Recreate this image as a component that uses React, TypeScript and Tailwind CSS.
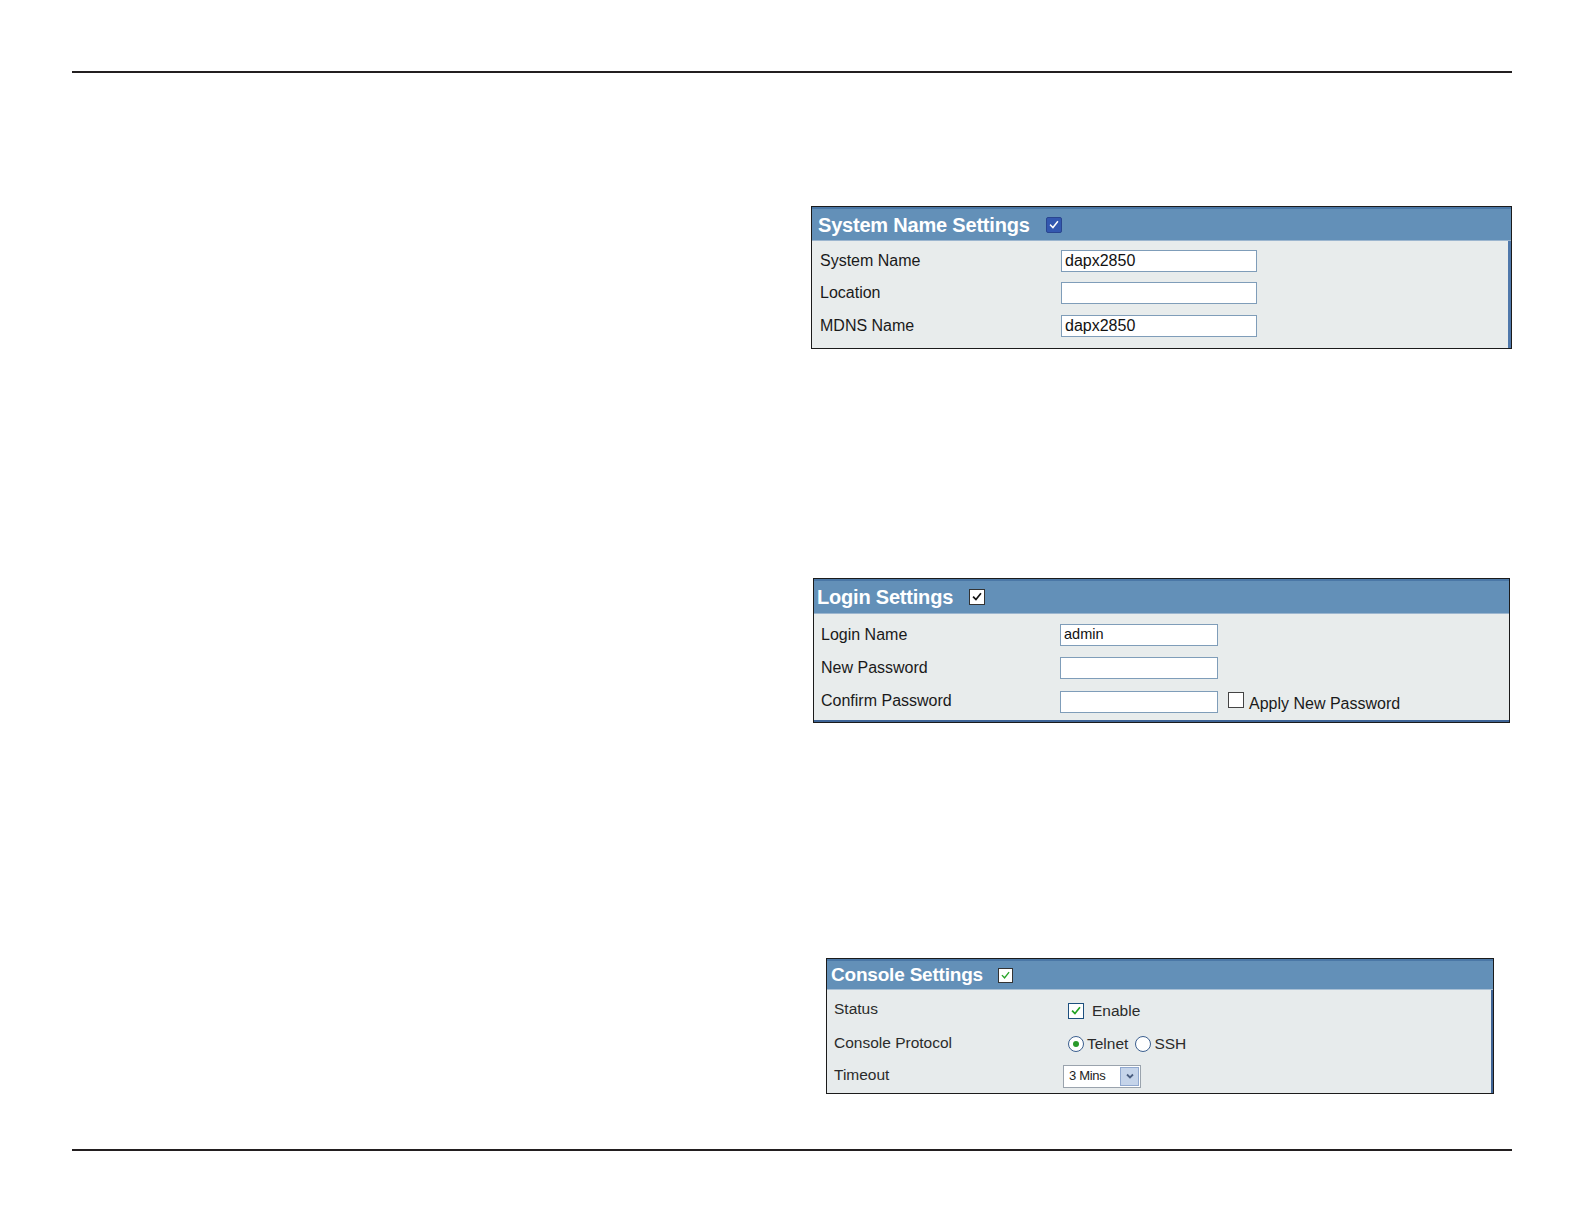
import React from "react";

const font = { fontFamily: '"Liberation Sans", Arial, sans-serif' };

function CheckMark({ color, w = 2.4 }: { color: string; w?: number }) {
  return (
    <svg viewBox="0 0 16 16" className="w-full h-full">
      <path d="M3.5 8.2 L6.6 11.4 L12.6 3.8" fill="none" stroke={color} strokeWidth={w} strokeLinecap="square" />
    </svg>
  );
}

function TextInput({ value, w, small }: { value: string; w: string; small?: boolean }) {
  return (
    <div
      className={`${w} h-[22px] bg-white border border-[#7f9db9] flex items-center pl-[3px] ${
        small ? "text-[14.5px]" : "text-[16px]"
      } text-[#111]`}
    >
      {value}
    </div>
  );
}

function Row({ label, children, h, offset, labelCls }: { label: string; children: React.ReactNode; h: string; offset: string; labelCls?: string }) {
  return (
    <div className={`flex items-center ${h}`}>
      <div className={`${offset} shrink-0 ${labelCls ?? "text-[16px] text-[#1a1a1a]"}`}>{label}</div>
      <div className="flex items-center">{children}</div>
    </div>
  );
}

export default function App() {
  return (
    <div className="w-[1585px] h-[1225px] bg-white overflow-hidden flex flex-col" style={font}>
      <div className="mt-[71px] ml-[72px] w-[1440px] h-[2px] bg-[#231f20] shrink-0" />

      {/* System Name Settings */}
      <div className="mt-[133px] ml-[811px] w-[701px] h-[143px] border border-[#1b1b1b] flex flex-col shrink-0 bg-[#e8ecec]">
        <div className="h-[34px] bg-[#6390b8] border-t-2 border-[#4a77a6] border-b border-b-[#9cb6cf] flex items-center pl-[6px]">
          <span className="text-white font-bold text-[20px] tracking-[-0.2px]">System Name Settings</span>
          <div className="ml-[16px] w-[16px] h-[16px] rounded-[2px] bg-[#3358b0] border border-[#2a4690] p-[1px]">
            <CheckMark color="#ffffff" w={2} />
          </div>
        </div>
        <div className="flex-1 flex flex-col pl-[8px] pt-[3px] border-r-[3px] border-r-[#4f78ab]">
          <Row label="System Name" h="h-[33px]" offset="w-[241px]">
            <TextInput value="dapx2850" w="w-[196px]" />
          </Row>
          <Row label="Location" h="h-[32px]" offset="w-[241px]">
            <TextInput value="" w="w-[196px]" />
          </Row>
          <Row label="MDNS Name" h="h-[33px]" offset="w-[241px]">
            <TextInput value="dapx2850" w="w-[196px]" />
          </Row>
        </div>
      </div>

      {/* Login Settings */}
      <div className="mt-[229px] ml-[813px] w-[697px] h-[145px] border border-[#1b1b1b] flex flex-col shrink-0 bg-[#e8ecec]">
        <div className="h-[35px] bg-[#6390b8] border-t-2 border-[#4a77a6] border-b border-b-[#9cb6cf] flex items-center pl-[3px]">
          <span className="text-white font-bold text-[20px] tracking-[-0.2px]">Login Settings</span>
          <div className="ml-[16px] w-[16px] h-[16px] bg-white border border-[#333] p-[1px]">
            <CheckMark color="#111111" w={2.2} />
          </div>
        </div>
        <div className="flex-1 flex flex-col pl-[7px] pt-[5px] border-b-2 border-b-[#3e6496]">
          <Row label="Login Name" h="h-[32px]" offset="w-[239px]">
            <TextInput value="admin" w="w-[158px]" small />
          </Row>
          <Row label="New Password" h="h-[33px]" offset="w-[239px]">
            <TextInput value="" w="w-[158px]" />
          </Row>
          <Row label="Confirm Password" h="h-[34px]" offset="w-[239px]">
            <div className="mt-[4px] flex items-start">
              <TextInput value="" w="w-[158px]" />
              <div className="ml-[10px] mt-[1px] w-[16px] h-[16px] bg-white border border-[#444]" />
              <span className="ml-[5px] mt-[1px] text-[16px] text-[#1a1a1a]">Apply New Password</span>
            </div>
          </Row>
        </div>
      </div>

      {/* Console Settings */}
      <div className="mt-[235px] ml-[826px] w-[668px] h-[136px] border border-[#1b1b1b] flex flex-col shrink-0 bg-[#e7ebec]">
        <div className="h-[31px] bg-[#6390b8] border-t-2 border-[#4a77a6] border-b border-b-[#a9c0d5] flex items-center pl-[4px]">
          <span className="text-white font-bold text-[19px] tracking-[-0.2px]">Console Settings</span>
          <div className="ml-[15px] w-[15px] h-[15px] bg-white border border-[#333] p-[1px]">
            <CheckMark color="#2aa52a" w={2} />
          </div>
        </div>
        <div className="flex-1 flex flex-col pl-[7px] pt-[4px] border-r-2 border-r-[#3e6496]">
          <Row label="Status" h="h-[33px]" offset="w-[234px]" labelCls="text-[15.5px] text-[#2b2b2b] -mt-[4px]">
            <div className="flex items-center">
              <div className="w-[16px] h-[16px] bg-white border border-[#1d4f7e] p-[1px]">
                <CheckMark color="#23a323" w={2.2} />
              </div>
              <span className="ml-[8px] text-[15.5px] text-[#2b2b2b]">Enable</span>
            </div>
          </Row>
          <Row label="Console Protocol" h="h-[33px]" offset="w-[234px]" labelCls="text-[15.5px] text-[#2b2b2b] -mt-[2px]">
            <div className="flex items-center">
              <div className="w-[16px] h-[16px] rounded-full bg-white border border-[#3b5f8f] flex items-center justify-center">
                <div className="w-[6px] h-[6px] rounded-full bg-[#2a9a2a]" />
              </div>
              <span className="ml-[3px] text-[15.5px] text-[#2b2b2b]">Telnet</span>
              <div className="ml-[7px] w-[16px] h-[16px] rounded-full bg-white border border-[#3b5f8f]" />
              <span className="ml-[3px] text-[15.5px] text-[#2b2b2b]">SSH</span>
            </div>
          </Row>
          <Row label="Timeout" h="h-[30px]" offset="w-[229px]" labelCls="text-[15.5px] text-[#2b2b2b] w-[229px]">
            <div className="mt-[2px] w-[78px] h-[23px] bg-white border border-[#9aa3ad] flex items-center">
              <span className="flex-1 pl-[5px] text-[13px] text-[#222] tracking-[-0.3px]">3 Mins</span>
              <div className="w-[19px] h-[19px] mr-[1px] bg-[#c5d4ea] border border-[#90a8cf] flex items-center justify-center">
                <svg viewBox="0 0 10 10" className="w-[10px] h-[10px]">
                  <path d="M2 3.5 L5 6.5 L8 3.5" fill="none" stroke="#4a5e80" strokeWidth="1.8" />
                </svg>
              </div>
            </div>
          </Row>
        </div>
      </div>

      <div className="mt-[55px] ml-[72px] w-[1440px] h-[2px] bg-[#231f20] shrink-0" />
    </div>
  );
}
